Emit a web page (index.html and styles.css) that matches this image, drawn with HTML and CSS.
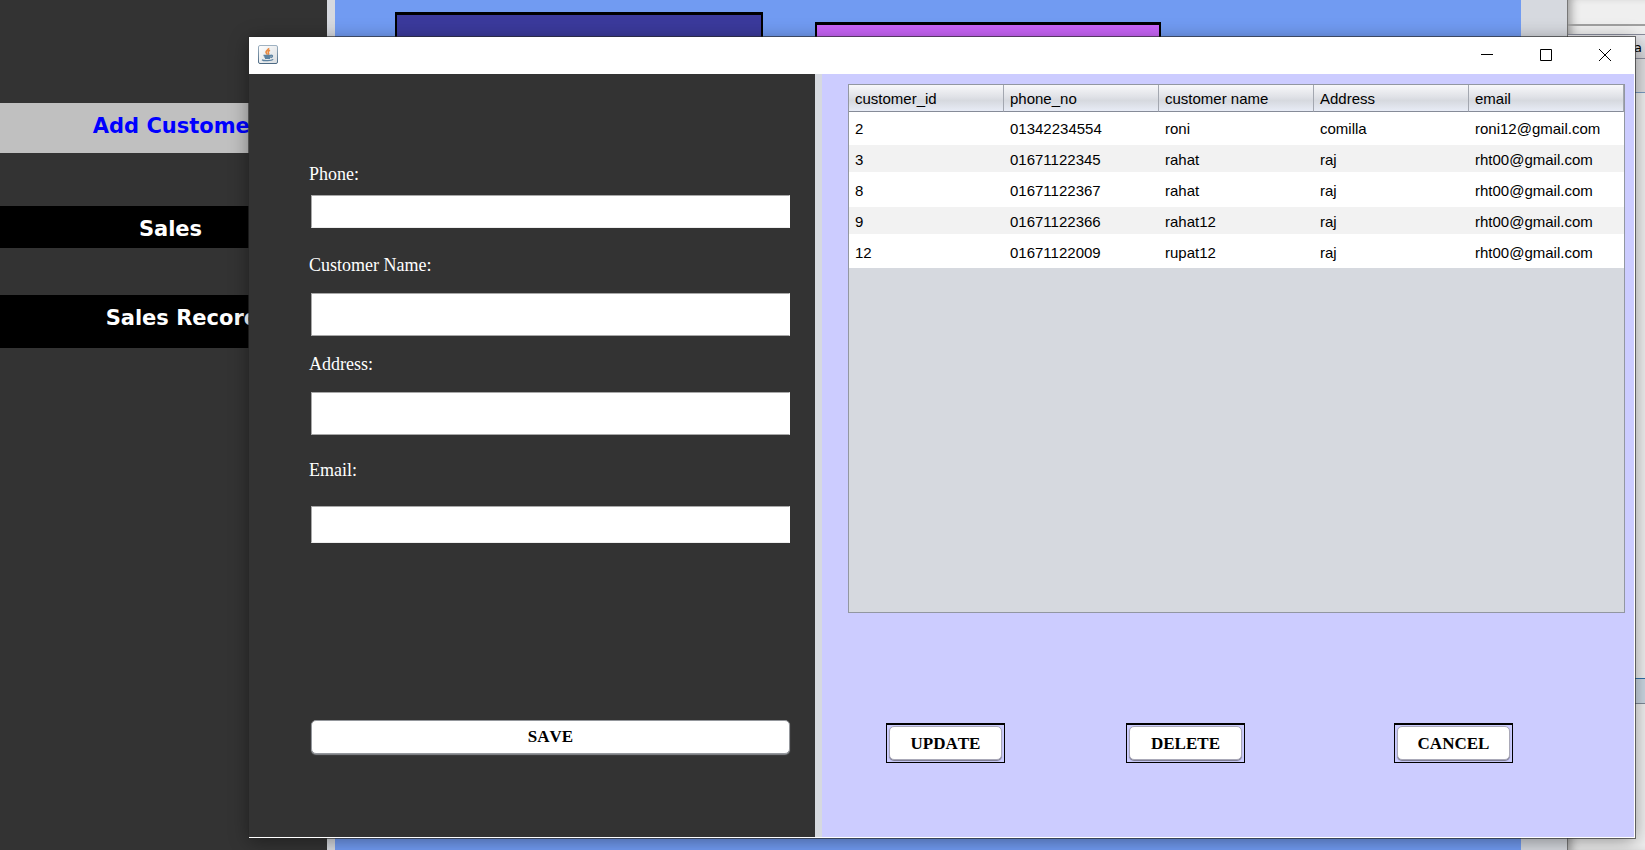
FILE: index.html
```html
<!DOCTYPE html>
<html lang="en">
<head>
<meta charset="utf-8">
<title>Customers</title>
<link rel="stylesheet" href="styles.css">
</head>
<body>
<div class="desktop">
  <nav class="sidebar">
    <a class="nav-item nav-active" href="#add">Add Customer</a>
    <a class="nav-item nav-sales" href="#sales">Sales</a>
    <a class="nav-item nav-records" href="#records">Sales Records</a>
  </nav>
  <div class="split"></div>
  <main class="board">
    <div class="tile tile-indigo"></div>
    <div class="tile tile-violet"></div>
  </main>
  <div class="board-edge"></div>
  <aside class="ide">
    <div class="ide-top"></div>
    <div class="ide-gap"></div>
    <div class="ide-tab">a</div>
    <div class="ide-tools"></div>
    <div class="ide-editor"></div>
    <div class="ide-output"></div>
    <div class="ide-rest"></div>
  </aside>
</div>

<section class="dialog" role="dialog" aria-label="Add Customer">
  <header class="titlebar">
    <svg class="java" viewBox="0 0 20 19" width="20" height="19" aria-hidden="true">
      <defs><linearGradient id="face" x1="0" y1="0" x2="1" y2="1"><stop offset="0" stop-color="#fff"/><stop offset="1" stop-color="#d9dde0"/></linearGradient>
      <linearGradient id="rim" x1="0" y1="0" x2="0" y2="1"><stop offset="0" stop-color="#9fb2c2"/><stop offset="1" stop-color="#4c6a84"/></linearGradient></defs>
      <rect x=".5" y=".5" width="19" height="18" rx="1.5" fill="url(#face)" stroke="url(#rim)"/>
      <path d="M10.600 3c.6 1.600-2.800 2.500-2.600 4.200.1 1 1.300 1.500 1.300 2.600M12 5.300c-1.800.9-2.300 1.500-1.500 2.600.4.600.3 1.200-.4 1.900" fill="none" stroke="#ea8a40" stroke-width="1.600"/>
      <path d="M5.500 10.500h8M6.300 12h6.400M7 13.300h5M13.300 10.200c1.700-.2 1.700 1.800-.5 2.400M4 14.700c1.500 1.500 9.500 1.300 11.200-.3" fill="none" stroke="#5d82a0" stroke-width="1.300"/>
    </svg>
    <div class="window-controls">
      <button type="button" aria-label="Minimize"><svg width="12" height="12" viewBox="0 0 12 12"><path d="M0 5.500h12" stroke="#000"/></svg></button>
      <button type="button" aria-label="Maximize"><svg width="12" height="12" viewBox="0 0 12 12"><path d="M.5.500h11v11H.5z" fill="none" stroke="#000"/></svg></button>
      <button type="button" aria-label="Close"><svg width="12" height="12" viewBox="0 0 12 12"><path d="M0 0l12 12M12 0L0 12" stroke="#000"/></svg></button>
    </div>
  </header>
  <div class="panes">
    <form class="form">
      <div class="field field-phone"><label for="phone">Phone:</label><input id="phone" type="text"></div>
      <div class="field field-name"><label for="name">Customer Name:</label><input id="name" type="text"></div>
      <div class="field field-address"><label for="address">Address:</label><input id="address" type="text"></div>
      <div class="field field-email"><label for="email">Email:</label><input id="email" type="text"></div>
      <button class="save" type="button">SAVE</button>
    </form>
    <div class="pane-divider"></div>
    <div class="records">
      <div class="table-box">
        <table>
          <thead><tr><th>customer_id</th><th>phone_no</th><th>customer name</th><th>Address</th><th>email</th></tr></thead>
          <tbody>
            <tr><td>2</td><td>01342234554</td><td>roni</td><td>comilla</td><td>roni12@gmail.com</td></tr>
            <tr><td>3</td><td>01671122345</td><td>rahat</td><td>raj</td><td>rht00@gmail.com</td></tr>
            <tr><td>8</td><td>01671122367</td><td>rahat</td><td>raj</td><td>rht00@gmail.com</td></tr>
            <tr><td>9</td><td>01671122366</td><td>rahat12</td><td>raj</td><td>rht00@gmail.com</td></tr>
            <tr><td>12</td><td>01671122009</td><td>rupat12</td><td>raj</td><td>rht00@gmail.com</td></tr>
          </tbody>
        </table>
      </div>
      <div class="actions">
        <div class="frame update"><button type="button">UPDATE</button></div>
        <div class="frame delete"><button type="button">DELETE</button></div>
        <div class="frame cancel"><button type="button">CANCEL</button></div>
      </div>
    </div>
  </div>
</section>
</body>
</html>
```
FILE: styles.css
```css
* { box-sizing: border-box; }
body { margin: 0; font-family: "Liberation Sans", Arial, sans-serif; overflow: hidden; }
button, input { margin: 0; font: inherit; }

/* Main application behind the dialog */
.desktop { display: flex; height: 100vh; background: #efefef; }
.sidebar { flex: 0 0 327px; padding-top: 103px; background: #333; }
.nav-item {
  display: block;
  padding-top: 8px;
  background: #000;
  color: #fff;
  font: bold 21px/30px "DejaVu Sans", "Noto Sans", sans-serif;
  text-align: center;
  text-decoration: none;
  white-space: nowrap;
}
.nav-active { height: 50px; padding-left: 26px; background: #c0c0c0; color: #00f; }
.nav-sales { height: 42px; margin-top: 53px; padding-left: 14px; }
.nav-records { height: 53px; margin-top: 47px; padding-left: 50px; }
.split { flex: 0 0 8px; background: #d6d9df; }
.board { flex: 1; display: flex; align-items: flex-start; gap: 52px; padding: 12px 0 0 60px; background: #719bf2; }
.tile { border: 2px solid #000; border-top-width: 3px; height: 120px; }
.tile-indigo { flex: 0 0 368px; background: #3b3a9c; }
.tile-violet { flex: 0 0 346px; margin-top: 10px; background: #c965f8; }
.board-edge { flex: 0 0 46px; background: #d6d9df; }

.ide { flex: 0 0 78px; display: flex; flex-direction: column; box-shadow: inset 8px 0 10px -5px #999; border-left: 1px solid #777; }
.ide-top { height: 26px; border-bottom: 2px solid #a0a0a0; }
.ide-gap { height: 9px; border-bottom: 1px solid #898c9c; }
.ide-tab { height: 24px; padding-right: 3px; background: linear-gradient(#e8e8ec, #d4d4d8); border-bottom: 1px solid #898c9c; font: 13px/26px "DejaVu Sans", sans-serif; text-align: right; }
.ide-tools { height: 34px; background: #dedee0; border-bottom: 1px solid #7a9ac0; }
.ide-editor { flex: 585; }
.ide-output { height: 26px; border-top: 1px solid #3070a8; border-bottom: 1px solid #808a98; background: #cbd7e2; }
.ide-rest { flex: 146; }

/* Dialog window */
.dialog {
  position: absolute;
  inset: 37px 10px 12px 249px;
  display: flex;
  flex-direction: column;
  background: #fff;
  border-right: 1px solid #fff;
  border-bottom: 1px solid #fff;
  box-shadow: 0 0 0 1px rgba(40, 40, 40, .65), 0 3px 18px rgba(0, 0, 0, .4);
}
.titlebar { flex: 0 0 37px; display: flex; justify-content: space-between; padding-left: 9px; background: #fff; }
.java { margin-top: 8px; }
.window-controls { display: flex; gap: 1px; padding-bottom: 2px; }
.window-controls button { width: 58px; padding: 0; border: 0; background: none; display: grid; place-items: center; }
.panes { flex: 1; display: grid; grid-template-columns: minmax(0, 566fr) 7px minmax(0, 812fr); min-height: 0; }

.form { display: flex; flex-direction: column; padding: 90px 25px 83px 60px; background: #333; color: #fff; }
.field { display: flex; flex-direction: column; font: 18px/20px "Liberation Serif", "Times New Roman", serif; }
.field input { height: 43px; margin-left: 2px; padding: 0 6px; border: 1px solid #a8a8a8; border-right-color: #fff; border-radius: 0; background: #fff; }
.field-phone { gap: 11px; }
.field-phone input { height: 33px; border-bottom-color: #eee; }
.field-name { gap: 18px; margin-top: 27px; }
.field-address { gap: 18px; margin-top: 18px; }
.field-email { gap: 26px; margin-top: 25px; }
.field-email input { height: 37px; border-bottom-color: #eee; }
.save, .frame button {
  padding: 0;
  border: 1px solid #94979c;
  border-radius: 5px;
  background: #fff;
  color: #000;
  font: bold 17px/20px "Liberation Serif", "Times New Roman", serif;
  font-kerning: none;
}
.save { height: 34px; margin: auto 0 0 2px; box-shadow: 0 1px 1px #85888c; }
.pane-divider { background: #d6d9df; }

.records { display: flex; flex-direction: column; padding: 10px 9px 74px 26px; background: #ccf; }
.table-box { flex: 1; margin-bottom: 110px; border: 1px solid #9297a1; background: #d6d9df; }
table { width: 100%; table-layout: fixed; border-collapse: separate; border-spacing: 0; font-size: 15px; line-height: 20px; color: #000; }
th, td { padding: 0 0 0 6px; text-align: left; white-space: nowrap; }
th {
  height: 27px;
  padding-top: 1px;
  font-weight: normal;
  background: linear-gradient(#f8f8fa, #e0e2e7 45%, #d6d9df 60%, #e8ecf6);
  border-right: 1px solid #a3a7b0;
  border-bottom: 1px solid #868b98;
}
td { height: 31px; background: #fff; }
tbody tr:first-child td { height: 32px; padding-top: 1px; }
tbody tr:last-child td { padding-top: 1px; }
tbody tr:nth-child(even) td { background: #f2f2f2; border-top: 1px solid #fff; border-bottom: 3px solid #fff; padding-top: 2px; }

.actions { display: flex; padding-left: 38px; }
.frame { flex: 0 0 119px; height: 40px; display: flex; padding: 1px 2px 2px; border: 1px solid #000; border-top-width: 2px; }
.frame button { flex: 1; padding-top: 2px; border-color: #aaa9b8; box-shadow: 0 1px 1px #77778a; }
.delete { margin-left: 121px; }
.cancel { margin-left: 149px; }
```
